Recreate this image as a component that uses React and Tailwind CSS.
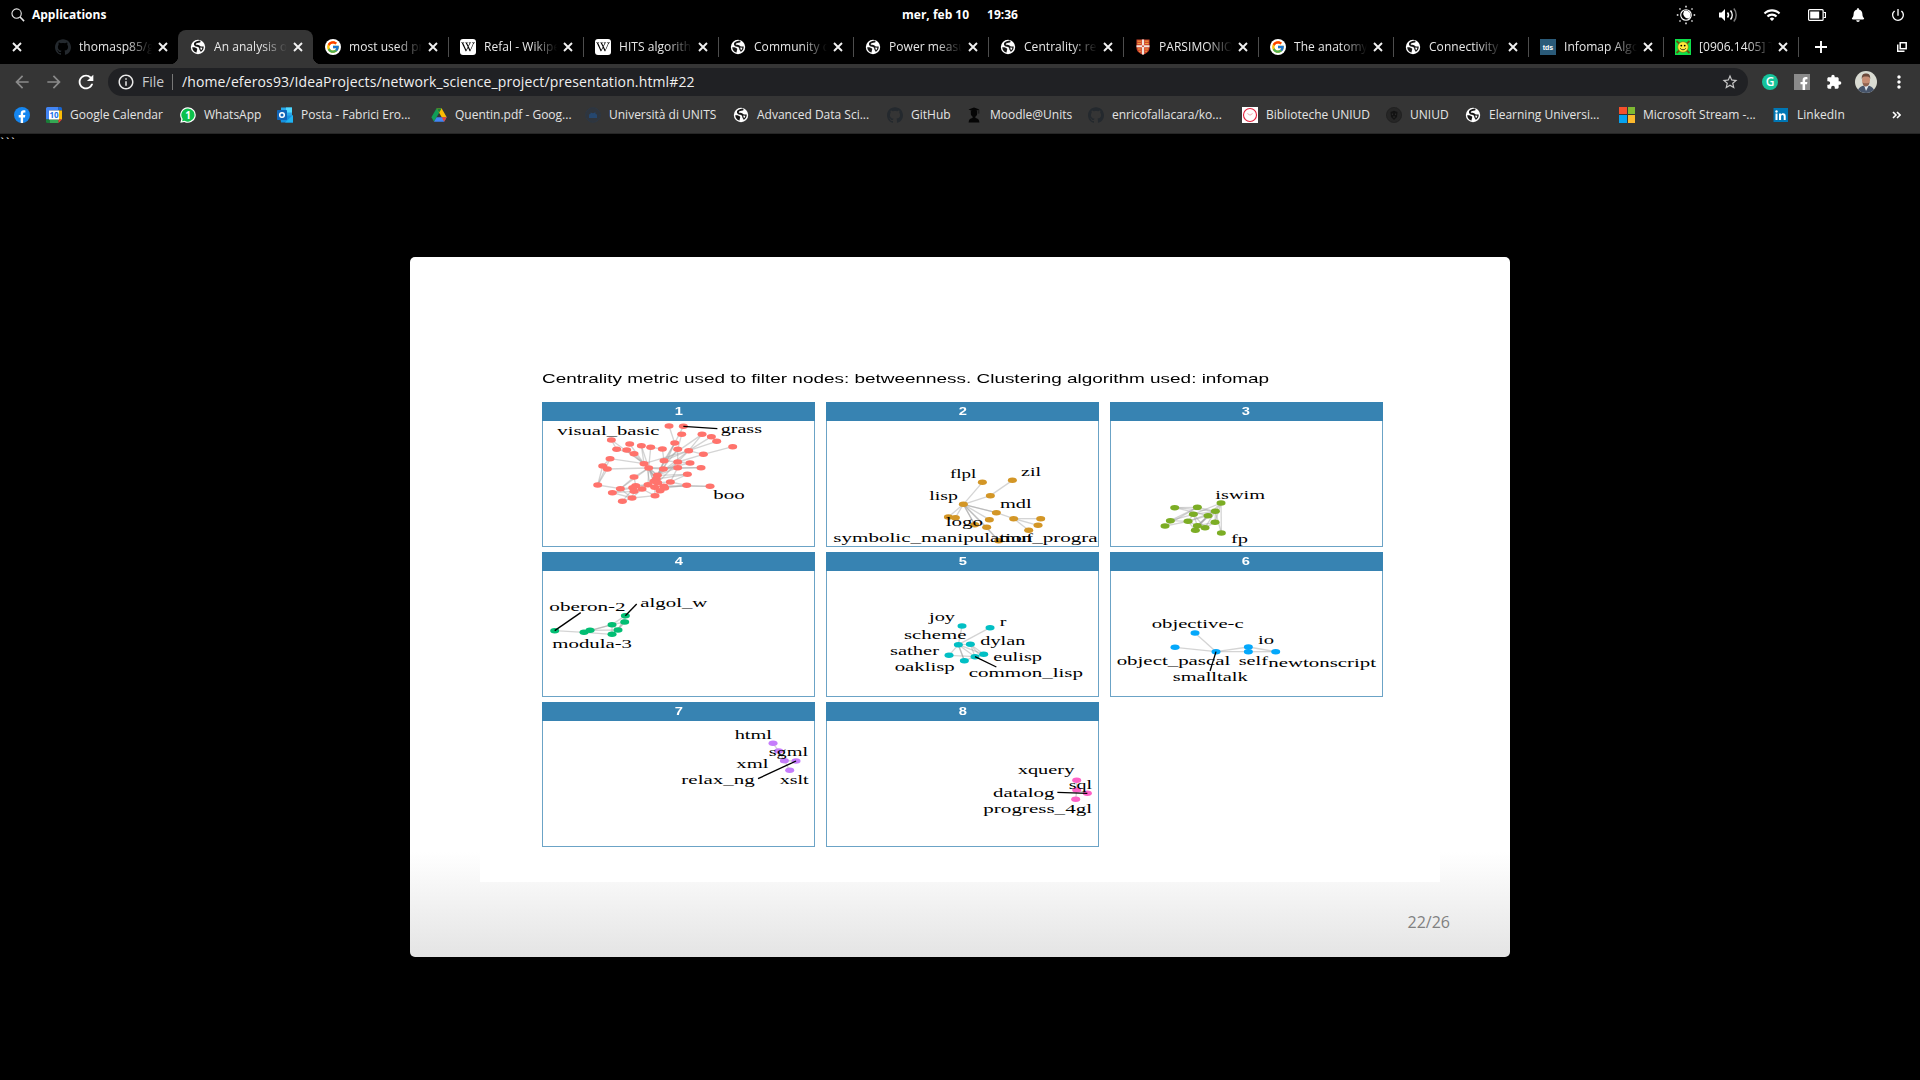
import React from "react";
import { SiGithub, SiWikipedia } from "react-icons/si";
import { FcGoogle } from "react-icons/fc";
import { FaBell, FaFacebookF } from "react-icons/fa";
import { MdRefresh, MdStarBorder, MdArrowBack, MdArrowForward, MdInfoOutline, MdMoreVert, MdWifi, MdPowerSettingsNew, MdExtension } from "react-icons/md";

/* ---------- small icons ---------- */

const Globe = () => (
  <svg viewBox="0 0 16 16" className="size-4">
    <circle cx="8" cy="8" r="7.2" fill="#fff" />
    <path d="M10.400 2.600C8.600 2.200 8 3.200 6.400 3.400 4.800 3.800 4.400 5.400 5.400 6.200 6.600 7 8.600 6.600 9.400 7.800" fill="none" stroke="#161616" strokeWidth="1.900" />
    <path d="M2.200 8.200C4.500 8 6.500 8.600 7.200 9.800 7.400 11 6.600 11.600 6.600 13.600 4 13 2.400 11 2.200 8.200Z" fill="#161616" />
    <path d="M9 6.800L11.200 7.600 13.700 7.400C13.900 9.600 12.600 11.900 10.600 13 10.800 11.600 9.800 11.400 9.400 10.400 9.100 9.500 9.400 8.600 8.200 8Z" fill="#161616" />
    <path d="M10.200 8.600L12.400 8.800 11.800 10.800 10.600 10.400Z" fill="#fff" />
  </svg>
);
const Github = () => <SiGithub className="size-4 text-[#24292e]" />;
const Google = () => (
  <span className="flex size-4 shrink-0 items-center justify-center rounded-full bg-white">
    <FcGoogle className="size-[14px]" />
  </span>
);
const Wiki = () => (
  <span className="flex size-4 shrink-0 items-center justify-center rounded-[3px] bg-white">
    <SiWikipedia className="size-[14px] text-black" />
  </span>
);
const Shield = () => (
  <svg viewBox="0 0 16 16" className="size-4">
    <path d="M1.500 0.500H14.500V9C14.500 12.400 11.200 14.800 8 15.800 4.800 14.800 1.500 12.400 1.500 9Z" fill="#d0452c" />
    <path d="M6.900 0.500H9.100V6.200H14.500V8.200H9.100V15.300L8 15.800 6.900 15.300V8.200H1.500V6.200H6.900Z" fill="#f3e6dc" />
    <path d="M2.500 2.200h3.400M2.500 4.500h3.400M10.100 2.200h3.400M10.100 4.500h3.400M3 10h2.900M4 12.300h1.900M10.100 10H13M10.100 12.300H12" stroke="#f0b040" strokeWidth="0.900" />
    <circle cx="8" cy="7.200" r="0.900" fill="#d0452c" />
  </svg>
);
const Tds = () => (
  <span className="flex size-4 shrink-0 items-center justify-center bg-[#2a5a78] font-['Liberation_Sans'] text-[7px] leading-none font-bold text-white">tds</span>
);
const Smiley = () => (
  <svg viewBox="0 0 16 16" className="size-4">
    <rect width="16" height="16" fill="#0ee04a" />
    <path d="M1.500 2l13 12M14.500 2L1.500 14" stroke="#6a5210" strokeWidth="1.800" />
    <circle cx="8" cy="8" r="5.300" fill="#ffe93b" stroke="#7c6a10" strokeWidth="0.600" />
    <circle cx="6.300" cy="6.600" r="0.900" />
    <circle cx="9.700" cy="6.600" r="0.900" />
    <path d="M5.200 9.300c1.200 2 4.400 2 5.600 0" fill="none" stroke="#222" strokeWidth="0.900" />
  </svg>
);
const Facebook = () => (
  <svg viewBox="0 0 16 16" className="size-4">
    <circle cx="8" cy="8" r="8" fill="#1586f0" />
    <path d="M6.700 16V10.400H4.700V8.100h2V6.400c0-2 1.200-3.100 3-3.100.9 0 1.700.15 1.700.15v2h-1c-1 0-1.300.6-1.300 1.200v1.450h2.200l-.35 2.300H9.100V16Z" fill="#fff" />
  </svg>
);
const Calendar = () => (
  <svg viewBox="0 0 16 16" className="size-4">
    <path d="M0 1.500 A1.500 1.500 0 0 1 1.500 0 H12.500 V3.500 H3.500 V12.500 H0Z" fill="#4285f4" />
    <path d="M12.500 0H14.500A1.500 1.500 0 0 1 16 1.500V3.500H12.500Z" fill="#1967d2" />
    <path d="M12.500 3.500H16V12.500H12.500Z" fill="#fbbc04" />
    <path d="M3.500 12.500H12.500V16H3.500Z" fill="#34a853" />
    <path d="M0 12.500H3.500V16H1.500A1.500 1.500 0 0 1 0 14.500Z" fill="#188038" />
    <path d="M12.500 12.500H16L12.500 16Z" fill="#ea4335" />
    <rect x="3" y="3.500" width="10" height="9" fill="#fff" />
    <text x="8" y="11" fontSize="8" fontWeight="700" textAnchor="middle" fill="#1a73e8" fontFamily="Open Sans, sans-serif">10</text>
  </svg>
);
const WhatsApp = () => (
  <svg viewBox="0 0 16 16" className="size-4">
    <path d="M8 0.200a7.800 7.800 0 1 1-3.700 14.700L0.300 15.800 1.300 12A7.800 7.800 0 0 1 8 0.200Z" fill="#fff" />
    <path d="M8 1.400a6.600 6.600 0 1 1-3.400 12.300L2.100 14.300 2.700 12A6.600 6.600 0 0 1 8 1.400Z" fill="#0cc14c" />
    <text x="8" y="11.600" fontSize="10" fontWeight="700" textAnchor="middle" fill="#fff" fontFamily="Open Sans, sans-serif">1</text>
  </svg>
);
const Outlook = () => (
  <svg viewBox="0 0 16 16" className="size-4">
    <rect x="4" y="0.500" width="11" height="10" fill="#28a8ea" />
    <rect x="9" y="0.500" width="6" height="5" fill="#50d9ff" />
    <path d="M3 8.500H16V15.500H4Z" fill="#1490df" />
    <path d="M16 8L8 15.500H16Z" fill="#1fb4f2" />
    <rect x="0" y="3" width="10" height="10" rx="0.800" fill="#0f64b8" />
    <circle cx="5" cy="8" r="2.300" fill="none" stroke="#fff" strokeWidth="1.500" />
  </svg>
);
const Drive = () => (
  <svg viewBox="0 0 16 16" className="size-4">
    <path d="M5.600 1.200L0.400 10.200 3 14.700 8.200 5.700Z" fill="#109d58" />
    <path d="M5.600 1.200H10.600L15.700 10.200H10.700Z" fill="#fbbc04" />
    <path d="M5.600 10.200H15.700L13.100 14.700H3Z" fill="#4285f4" />
    <path d="M10.700 10.200H15.700L13.100 14.700Z" fill="#ea4335" />
    <path d="M5.600 1.200H10.600L8.200 5.700Z" fill="#188038" />
  </svg>
);
const Units = () => (
  <svg viewBox="0 0 16 16" className="size-4">
    <circle cx="8" cy="8" r="7.300" fill="#2f353d" stroke="#2b3a4b" strokeWidth="0.700" />
    <path d="M4 11V7.500l1.500-.8V5.500L8 6.300l2.500-1V7L12 7.500V11Z" fill="#25476f" />
  </svg>
);
const Moodle = () => (
  <svg viewBox="0 0 16 16" className="size-4" fill="#050505">
    <path d="M2.500 2.600L8 0.600l5.500 2L8 4.600Z" />
    <path d="M4.800 3.600h6.400v2.600a3.200 3.400 0 0 1-6.400 0Z" />
    <path d="M6.600 9h2.800v2c2.600.2 3.900 1.600 4 4.600H2.600c.1-3 1.400-4.400 4-4.600Z" />
    <path d="M12.800 3v3.600" stroke="#050505" strokeWidth="0.700" />
  </svg>
);
const Library = () => (
  <svg viewBox="0 0 16 16" className="size-4">
    <rect width="16" height="16" fill="#fff" />
    <circle cx="8" cy="8" r="6.500" fill="none" stroke="#e3203c" strokeWidth="1.100" />
    <path d="M5.400 6.500L8 8.200 10.600 6.500" fill="none" stroke="#f0909c" strokeWidth="0.800" />
  </svg>
);
const Uniud = () => (
  <svg viewBox="0 0 16 16" className="size-4">
    <circle cx="8" cy="8" r="7.600" fill="#262626" stroke="#1e1e1e" strokeWidth="0.700" />
    <path d="M4.500 5L8 3.800 11.500 5 11 10 8 13 5 10Z" fill="#131313" />
    <path d="M6.400 6.500v1.600M9.600 6.500v1.600M7 10h2" stroke="#333" strokeWidth="0.800" />
  </svg>
);
const Microsoft = () => (
  <span className="grid size-4 shrink-0 grid-cols-2 gap-px">
    <i className="bg-[#f6502c]" />
    <i className="bg-[#7fb932]" />
    <i className="bg-[#06a2ef]" />
    <i className="bg-[#fcb92d]" />
  </span>
);
const LinkedIn = () => (
  <svg viewBox="0 0 16 16" className="size-4">
    <rect x="0.500" y="1" width="14.500" height="14" fill="#0077b5" />
    <path d="M2.500 6.500h2v6.500H2.500ZM6 6.500h2v.9c.4-.7 1.200-1.100 2.100-1.100 1.900 0 2.600 1.200 2.600 3.100V13h-2V9.800c0-.9-.2-1.700-1.200-1.700s-1.400.7-1.400 1.700V13H6Z" fill="#fff" />
    <circle cx="3.500" cy="4.500" r="1.200" fill="#fff" />
  </svg>
);
const Close = () => (
  <svg viewBox="0 0 10 10" className="size-[10px]">
    <path d="M1 1L9 9M9 1L1 9" stroke="#f1f1f1" strokeWidth="1.900" />
  </svg>
);

/* ---------- desktop bar ---------- */

function DesktopBar() {
  return (
    <header className="grid h-[30px] shrink-0 grid-cols-3 text-[12px] font-bold text-white">
      <div className="flex items-center gap-2 pl-[11px]">
        <svg viewBox="0 0 15 15" className="size-[14px]" fill="none" stroke="#e8e8e8" strokeWidth="1.200">
          <circle cx="6" cy="6" r="5" />
          <path d="M9.700 9.700L14 14" strokeWidth="1.700" />
        </svg>
        <span className="-ml-px">Applications</span>
      </div>
      <div className="flex items-center justify-center gap-[18px]">
        <span>mer, feb 10</span>
        <span>19:36</span>
      </div>
      <div className="flex items-center justify-end">
        <svg viewBox="0 0 20 20" className="mr-[22px] size-5" fill="none" stroke="#fff" strokeWidth="1.400">
          <circle cx="10" cy="10" r="5.300" strokeWidth="1.100" />
          <path d="M10 5.500A4.600 4.600 0 0 1 14.500 10.500 4.500 4.500 0 0 1 13 13.500 5 5 0 0 1 8 6Z" fill="#fff" stroke="none" />
          <path d="M10 0.800v1.600M10 17.600v1.600M0.800 10h1.600M17.600 10h1.600M3.500 3.500l1 1M15.500 15.500l1 1M3.500 16.500l1-1M15.500 4.500l1-1" />
        </svg>
        <svg viewBox="0 0 20 16" className="mr-[25px] h-4 w-5" fill="none" stroke="#fff" strokeWidth="1.500">
          <path d="M1 5.500h2.500L7 2v12L3.500 10.500H1Z" fill="#fff" stroke="none" />
          <path d="M9.500 5.500a4 4 0 0 1 0 5M12.500 3.500a7 7 0 0 1 0 9" />
          <path d="M15.800 1.500a10 10 0 0 1 0 13" stroke="#777" />
        </svg>
        <MdWifi className="mr-[27px] size-[18px]" />
        <svg viewBox="0 0 18 12" className="mr-[25px] h-3 w-[18px]">
          <rect x="0.600" y="0.600" width="14.500" height="10.800" rx="1" fill="none" stroke="#fff" strokeWidth="1.200" />
          <rect x="2.200" y="2.500" width="9" height="7" fill="#fff" />
          <path d="M15.500 3.500H17.500V8.500H15.500" fill="none" stroke="#fff" strokeWidth="1.200" />
        </svg>
        <FaBell className="mr-[25px] size-[14px]" />
        <MdPowerSettingsNew className="mr-[14px] size-4" />
      </div>
    </header>
  );
}

/* ---------- tabs ---------- */

const tabs = [
  { icon: Github, title: "thomasp85/g" },
  { icon: Globe, title: "An analysis o", active: true },
  { icon: Google, title: "most used pr" },
  { icon: Wiki, title: "Refal - Wikipe", line: true },
  { icon: Wiki, title: "HITS algorith", line: true },
  { icon: Globe, title: "Community d", line: true },
  { icon: Globe, title: "Power measu", line: true },
  { icon: Globe, title: "Centrality: re", line: true },
  { icon: Shield, title: "PARSIMONIO", line: true },
  { icon: Google, title: "The anatomy", line: true },
  { icon: Globe, title: "Connectivity", line: true },
  { icon: Tds, title: "Infomap Algo", line: true },
  { icon: Smiley, title: "[0906.1405] T", line: true },
];

function Tab({ icon: Icon, title, active, line }) {
  return (
    <div
      className={
        active
          ? "relative flex h-[34px] w-[135px] shrink-0 items-center rounded-t-lg bg-[#353535] pl-3 before:absolute before:bottom-0 before:-left-2 before:size-2 before:bg-[radial-gradient(circle_at_0_0,transparent_8px,#353535_8.5px)] after:absolute after:-right-2 after:bottom-0 after:size-2 after:bg-[radial-gradient(circle_at_100%_0,transparent_8px,#353535_8.5px)]"
          : "relative flex h-[34px] w-[135px] shrink-0 items-center pl-3"
      }
    >
      {line && <i className="absolute top-[7px] left-0 h-5 w-px bg-[#4d4d4d]" />}
      <Icon />
      <span className="ml-2 w-[73px] overflow-hidden mask-r-from-65% text-[12px] tracking-[0.05px] whitespace-nowrap text-[#e8e8e8]">{title}</span>
      <span className="ml-[6px]">
        <Close />
      </span>
    </div>
  );
}

function TabStrip() {
  return (
    <nav className="flex h-[34px] shrink-0 items-center">
      <div className="flex w-[43px] shrink-0 pl-3">
        <Close />
      </div>
      {tabs.map((t) => (
        <Tab key={t.title} {...t} />
      ))}
      <div className="flex grow items-center justify-between pr-[13px]">
        <div className="flex items-center gap-4">
          <i className="h-5 w-px bg-[#4d4d4d]" />
          <svg viewBox="0 0 12 12" className="size-3">
            <path d="M6 0V12M0 6H12" stroke="#fff" strokeWidth="1.900" />
          </svg>
        </div>
        <svg viewBox="0 0 10 10" className="size-[10px]" fill="none" stroke="#fff" strokeWidth="1.500">
          <rect x="3.200" y="0.700" width="6" height="6" />
          <path d="M0.700 2.500V9.300H7.500" />
        </svg>
      </div>
    </nav>
  );
}

/* ---------- toolbar ---------- */

function Toolbar() {
  return (
    <div className="flex h-9 shrink-0 items-center bg-[#353535]">
      <MdArrowBack className="ml-[12px] size-[20px] text-[#8a8a8a]" />
      <MdArrowForward className="ml-[12px] size-[20px] text-[#8a8a8a]" />
      <MdRefresh className="ml-[11px] size-[22px] text-white" />
      <div className="ml-[11px] flex h-7 w-[1640px] items-center rounded-full bg-[#202124]">
        <MdInfoOutline className="ml-[9px] size-[18px] text-[#e8e8e8]" />
        <span className="ml-[7px] w-[24px] pb-px text-[14px] text-[#c8cacd]">File</span>
        <i className="ml-[6px] h-4 w-px bg-[#777]" />
        <span className="ml-[9px] pb-[2px] text-[14px] tracking-[0.13px] text-[#f0f0f0]">/home/eferos93/IdeaProjects/network_science_project/presentation.html#22</span>
        <MdStarBorder className="mr-[9px] ml-auto size-[18px] text-[#c6c6c6]" />
      </div>
      <span className="ml-[14px] flex size-4 items-center justify-center rounded-full bg-[#15c39a] text-[12px] font-semibold text-white">G</span>
      <span className="ml-4 flex size-4 items-end justify-center bg-[#8a8a8a]">
        <FaFacebookF className="ml-1 size-[13px] text-white" />
      </span>
      <MdExtension className="ml-4 size-4 text-white" />
      <svg viewBox="0 0 22 22" className="ml-[13px] size-[22px] rounded-full">
        <rect width="22" height="22" fill="#d9dbd2" />
        <path d="M2 22C3 16 7 14.500 11 14.500S19 16 20 22Z" fill="#46546a" />
        <path d="M9 14L11 20 14 14Z" fill="#dfe6ee" />
        <ellipse cx="11" cy="9" rx="4" ry="5.500" fill="#c68d74" />
        <path d="M6.800 8C6.500 3.500 8.500 2.500 11 2.500s4.600 1 4.200 5.500C14.500 5.500 13 5.500 11 5.500S7.500 5.500 6.800 8Z" fill="#6a4a3c" />
        <path d="M7.400 11c.5 3.600 2 4.500 3.600 4.500s3.100-1 3.600-4.500c-1 1.500-2 1.300-3.600 1.300s-2.600.2-3.600-1.300Z" fill="#8f6250" />
      </svg>
      <MdMoreVert className="ml-[12px] size-[20px] text-white" />
    </div>
  );
}

/* ---------- bookmarks ---------- */

const bookmarks = [
  { icon: Facebook, label: "", w: "w-8" },
  { icon: Calendar, label: "Google Calendar", w: "w-[134px]" },
  { icon: WhatsApp, label: "WhatsApp", w: "w-[97px]" },
  { icon: Outlook, label: "Posta - Fabrici Ero...", w: "w-[154px]" },
  { icon: Drive, label: "Quentin.pdf - Goog...", w: "w-[154px]" },
  { icon: Units, label: "Università di UNITS", w: "w-[148px]" },
  { icon: Globe, label: "Advanced Data Sci...", w: "w-[154px]" },
  { icon: Github, label: "GitHub", w: "w-[79px]" },
  { icon: Moodle, label: "Moodle@Units", w: "w-[122px]" },
  { icon: Github, label: "enricofallacara/ko...", w: "w-[154px]" },
  { icon: Library, label: "Biblioteche UNIUD", w: "w-[144px]" },
  { icon: Uniud, label: "UNIUD", w: "w-[79px]" },
  { icon: Globe, label: "Elearning Universi...", w: "w-[154px]" },
  { icon: Microsoft, label: "Microsoft Stream -...", w: "w-[154px]" },
  { icon: LinkedIn, label: "LinkedIn", w: "w-[80px]" },
];

function Bookmarks() {
  return (
    <div className="flex h-[34px] shrink-0 items-center border-b border-[#262626] bg-[#353535] pb-[4px] pl-[14px] text-[12px] text-[#e4e4e4]">
      {bookmarks.map(({ icon: Icon, label, w }, i) => (
        <div key={i} className={"flex shrink-0 items-center gap-2 whitespace-nowrap " + w}>
          <Icon />
          {label && <span>{label}</span>}
        </div>
      ))}
      <svg viewBox="0 0 9 8" className="ml-[39px] h-2 w-[9px]" fill="none" stroke="#fff" strokeWidth="1.600">
        <path d="M1 1L4 4 1 7M5 1L8 4 5 7" />
      </svg>
    </div>
  );
}

/* ---------- cluster plots (three drawing units per pixel) ---------- */

const clusters = [
  {
    id: 1,
    view: "36 183 820 378",
    color: "#ff736c",
    nodes: [[417,198],[460,199],[455,223],[516,223],[544,230],[560,244],[608,260],[434,249],[443,268],[476,272],[520,283],[244,240],[299,252],[334,257],[362,262],[260,268],[290,270],[312,281],[397,267],[240,296],[218,318],[232,327],[203,375],[342,311],[356,324],[402,302],[400,327],[443,306],[443,323],[480,309],[513,323],[472,343],[312,351],[382,346],[379,357],[372,364],[383,368],[421,366],[354,374],[317,377],[308,383],[271,386],[247,398],[312,394],[336,387],[374,382],[401,379],[404,384],[390,392],[375,407],[306,414],[277,424],[470,376],[540,379]],
    edges: [[417,198,434,249],[460,199,434,249],[455,223,443,268],[516,223,476,272],[544,230,476,272],[560,244,476,272],[516,223,402,302],[608,260,520,283],[520,283,476,272],[476,272,402,302],[476,272,383,368],[434,249,400,327],[434,249,402,302],[443,268,443,306],[443,268,382,346],[443,306,382,346],[476,272,382,346],[476,272,342,311],[244,240,260,268],[244,240,342,311],[299,252,342,311],[334,257,342,311],[362,262,356,324],[260,268,312,281],[290,270,342,311],[312,281,342,311],[397,267,362,262],[334,257,356,324],[397,267,402,302],[240,296,342,311],[240,296,218,318],[240,296,203,375],[218,318,203,375],[232,327,203,375],[232,327,356,324],[203,375,271,386],[218,318,232,327],[342,311,356,324],[356,324,400,327],[356,324,443,323],[356,324,382,346],[342,311,382,346],[356,324,372,364],[356,324,354,374],[356,324,383,368],[356,324,379,357],[402,302,382,346],[402,302,443,306],[402,302,379,357],[400,327,382,346],[443,306,480,309],[443,323,382,346],[443,323,513,323],[443,323,421,366],[480,309,400,327],[513,323,400,327],[472,343,382,346],[472,343,379,357],[472,343,421,366],[312,351,356,324],[312,351,271,386],[312,351,317,377],[317,377,354,374],[308,383,354,374],[271,386,308,383],[247,398,312,394],[312,394,354,374],[247,398,308,383],[247,398,306,414],[277,424,306,414],[277,424,317,377],[306,414,336,387],[306,414,312,394],[306,414,375,407],[375,407,404,384],[375,407,336,387],[336,387,372,364],[470,376,401,379],[470,376,404,384],[470,376,421,366],[540,379,470,376],[540,379,401,379],[421,366,383,368],[421,366,401,379],[374,382,401,379],[390,392,354,374],[271,386,306,414],[375,407,374,382],[271,386,356,324],[520,283,443,306],[434,249,382,346],[345,311,379,360],[350,320,360,372],[356,324,376,382]],
    ticks: [[460,199,562,206]],
    labels: [["visual_basic",82,225,306],["grass",572,217,124],["boo",550,417,94]],
  },
  {
    id: 2,
    view: "33 93 820 378",
    color: "#d39626",
    nodes: [[502,277],[592,271],[526,317],[445,343],[544,368],[400,381],[421,383],[523,389],[596,386],[677,386],[669,406],[641,421],[479,404],[515,412],[551,452]],
    edges: [[445,343,502,277],[445,343,526,317],[526,317,592,271],[445,343,544,368],[544,368,596,386],[445,343,400,381],[445,343,421,383],[445,343,523,389],[445,343,479,404],[445,343,515,412],[445,343,551,452],[445,343,544,368],[445,343,479,404],[596,386,677,386],[596,386,669,406],[596,386,641,421],[515,412,551,452]],
    ticks: [],
    labels: [["flpl",405,263,79],["zil",618,257,60],["lisp",343,330,86],["mdl",555,354,95],["logo",392,408,112],["symbolic_manipulation_progra",55,455,793],["muf",552,454,102]],
  },
  {
    id: 3,
    view: "30 93 820 378",
    color: "#7cad25",
    nodes: [[363,339],[292,352],[224,353],[346,364],[280,373],[324,377],[211,392],[264,394],[345,397],[195,408],[292,407],[315,413],[286,421],[364,429]],
    edges: [[363,339,280,373],[292,352,224,353],[224,353,346,364],[224,353,324,377],[292,352,195,408],[292,352,346,364],[363,339,346,364],[363,339,292,407],[363,339,345,397],[346,364,364,429],[346,364,292,407],[346,364,315,413],[346,364,280,373],[280,373,211,392],[280,373,264,394],[280,373,292,407],[280,373,315,413],[324,377,264,394],[324,377,292,407],[324,377,286,421],[211,392,264,394],[211,392,292,352],[195,408,264,394],[264,394,292,407],[264,394,286,421],[345,397,292,407],[346,364,345,397],[363,339,364,429],[346,364,264,394],[345,397,315,413]],
    ticks: [],
    labels: [["iswim",346,325,149],["fp",393,457,51]],
  },
  {
    id: 4,
    view: "36 78 820 378",
    color: "#02be73",
    nodes: [[74,257],[162,262],[180,256],[246,239],[286,212],[284,231],[264,255],[246,268]],
    edges: [[74,257,162,262],[162,262,246,239],[180,256,264,255],[162,262,246,268],[180,256,246,239],[246,239,286,212],[246,239,284,231],[246,239,264,255],[246,239,246,268],[246,268,264,255],[264,255,284,231],[264,255,286,212],[246,268,284,231],[284,231,286,212]],
    ticks: [[74,257,152,203],[286,212,320,177]],
    labels: [["oberon-2",58,197,229],["algol_w",331,184,201],["modula-3",67,307,239]],
  },
  {
    id: 5,
    view: "33 78 820 378",
    color: "#02bfc4",
    nodes: [[441,243],[525,248],[430,299],[466,298],[402,331],[480,335],[506,328],[448,347]],
    edges: [[441,243,430,299],[525,248,430,299],[430,299,466,298],[430,299,402,331],[430,299,480,335],[430,299,506,328],[430,299,448,347],[466,298,506,328],[466,298,480,335],[402,331,480,335],[480,335,506,328],[448,347,480,335],[430,299,448,347],[466,298,498,335]],
    ticks: [[480,335,544,366]],
    labels: [["joy",342,228,78],["r",554,243,20],["scheme",267,282,187],["dylan",496,300,135],["sather",225,330,147],["eulisp",535,348,146],["oaklisp",239,378,180],["common_lisp",461,395,343]],
  },
  {
    id: 6,
    view: "30 78 820 378",
    color: "#04a8fb",
    nodes: [[285,264],[225,307],[348,320],[445,306],[445,320],[527,320]],
    edges: [[285,264,348,320],[225,307,348,320],[348,320,445,306],[348,320,445,320],[445,306,527,320],[445,320,527,320],[445,306,445,320]],
    ticks: [[348,320,330,378]],
    labels: [["objective-c",155,249,276],["io",474,295,48],["object_pascal",50,359,341],["self",416,359,88],["newtonscript",505,366,323],["smalltalk",218,406,225]],
  },
  {
    id: 7,
    view: "36 78 820 378",
    color: "#c57cfb",
    nodes: [[729,145],[746,168],[763,197],[798,198],[779,226]],
    edges: [[729,145,746,168],[746,168,763,197],[763,197,798,198],[763,197,779,226]],
    ticks: [[798,198,684,251]],
    labels: [["html",614,130,112],["sgml",716,182,118],["xml",619,219,96],["relax_ng",454,265,220],["xslt",749,265,87]],
  },
  {
    id: 8,
    view: "888 78 820 378",
    color: "#fe61c6",
    nodes: [[1640,256],[1640,285],[1672,295],[1637,313]],
    edges: [[1640,256,1640,285],[1640,285,1672,295],[1640,285,1637,313]],
    ticks: [[1582,292,1672,295]],
    labels: [["xquery",1463,235,170],["sql",1616,281,70],["datalog",1389,304,184],["progress_4gl",1360,353,326]],
  },
];

function Cluster({ id, view, color, nodes, edges, ticks, labels }) {
  return (
    <section className="flex h-[145px] flex-col bg-white shadow-[inset_0_0_0_1px_#6ba3c6]">
      <h2 className="flex h-[19px] items-center justify-center bg-[#3783b2] font-['Liberation_Sans'] text-[10.5px] font-bold text-white">
        <span className="inline-block scale-x-[1.4]">{id}</span>
      </h2>
      <svg viewBox={view} className="h-[126px] w-full">
        {edges.map(([a, b, c, d], i) => (
          <line key={i} x1={a} y1={b} x2={c} y2={d} stroke="#999" strokeOpacity="0.42" strokeWidth="4" />
        ))}
        {nodes.map(([x, y], i) => (
          <ellipse key={i} cx={x} cy={y} rx="13.500" ry="8.200" fill={color} />
        ))}
        {ticks.map(([a, b, c, d], i) => (
          <line key={i} x1={a} y1={b} x2={c} y2={d} stroke="#000" strokeWidth="4" />
        ))}
        {labels.map(([t, x, y, w]) => (
          <text key={t} x={x} y={y + 1} textLength={w} lengthAdjust="spacingAndGlyphs" fontSize="36" fontFamily="Liberation Serif, serif" fill="#000">
            {t}
          </text>
        ))}
      </svg>
    </section>
  );
}

function Slide() {
  return (
    <article className="flex h-[700px] w-[1100px] flex-col rounded-[5px] bg-[linear-gradient(#fff_0,#fff_85%,#e4e4e4_100%)] px-[70px]">
      <figure className="h-[625px] bg-white pt-[112px] pl-[62px]">
        <figcaption className="mb-[13px] h-5 origin-left scale-x-[1.456] font-['Liberation_Sans'] text-[13px] leading-5 whitespace-nowrap text-black">
          Centrality metric used to filter nodes: betweenness. Clustering algorithm used: infomap
        </figcaption>
        <div className="grid w-[842px] grid-cols-[repeat(3,273.4px)] gap-x-[10.4px] gap-y-[5px]">
          {clusters.map((c) => (
            <Cluster key={c.id} {...c} />
          ))}
        </div>
      </figure>
      <footer className="flex justify-end pt-[28px] text-[16px] leading-6 text-[#808080]">
        <span className="-mr-[10px]">22/26</span>
      </footer>
    </article>
  );
}

export default function App() {
  return (
    <div className="flex h-[1080px] w-[1920px] flex-col overflow-hidden bg-black font-['Open_Sans','Noto_Sans',sans-serif]">
      <DesktopBar />
      <TabStrip />
      <Toolbar />
      <Bookmarks />
      <main className="flex grow flex-col items-center">
        <pre className="h-[123px] self-start pt-[3px] font-['DejaVu_Sans_Mono',monospace] text-[9px] leading-[11px] font-bold text-white">```</pre>
        <Slide />
      </main>
    </div>
  );
}
